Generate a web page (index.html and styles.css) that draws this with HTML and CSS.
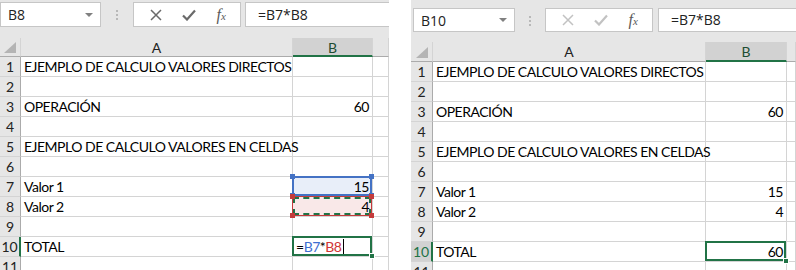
FILE: index.html
```html
<!DOCTYPE html>
<html lang="es">
<head>
    <meta charset="UTF-8">
    <title>Ejemplo de calculo</title>
    <link rel="stylesheet" href="styles.css">
</head>
<body>
<div class="page">

    <!-- hoja en modo edicion -->
    <section class="sheet sheet-edit">
        <div class="toolbar">
            <div class="namebox"><span>B8</span><span class="caret"></span></div>
            <div class="grip"><i></i><i></i><i></i></div>
            <div class="fx-buttons">
                <svg width="12" height="12" viewBox="0 0 12 12"><path d="M1 1 L11 11 M11 1 L1 11" stroke="currentColor" stroke-width="1.5" fill="none"/></svg>
                <svg width="14" height="12" viewBox="0 0 14 12"><path d="M1 6.5 L5 10.5 L13 1.5" stroke="currentColor" stroke-width="2.2" fill="none"/></svg>
                <span class="fx">f<small>x</small></span>
            </div>
            <div class="formula">=B7*B8</div>
        </div>
        <div class="grid">
            <div class="corner"><span class="tri"></span></div>
            <div class="ch">A</div>
            <div class="ch on">B</div>
            <div class="ch"></div>

            <div class="rh">1</div><div class="c">EJEMPLO DE CALCULO VALORES DIRECTOS</div><div class="c"></div><div class="c"></div>
            <div class="rh">2</div><div class="c"></div><div class="c"></div><div class="c"></div>
            <div class="rh">3</div><div class="c">OPERACIÓN</div><div class="c num">60</div><div class="c"></div>
            <div class="rh">4</div><div class="c"></div><div class="c"></div><div class="c"></div>
            <div class="rh">5</div><div class="c">EJEMPLO DE CALCULO VALORES EN CELDAS</div><div class="c"></div><div class="c"></div>
            <div class="rh">6</div><div class="c"></div><div class="c"></div><div class="c"></div>
            <div class="rh">7</div><div class="c">Valor 1</div>
            <div class="c num ref-blue">15<b class="h tl"></b><b class="h tr"></b><b class="h bl"></b><b class="h br"></b></div>
            <div class="c"></div>
            <div class="rh">8</div><div class="c">Valor 2</div>
            <div class="c num ref-red">4<b class="h tl"></b><b class="h tr"></b><b class="h bl"></b><b class="h br"></b></div>
            <div class="c"></div>
            <div class="rh">9</div><div class="c"></div><div class="c"></div><div class="c"></div>
            <div class="rh row-on">10</div><div class="c">TOTAL</div>
            <div class="c active"><span>=</span><span class="t-blue">B7</span><span>*</span><span class="t-red">B8</span><span class="cursor"></span><b class="fill"></b></div>
            <div class="c"></div>
            <div class="rh">11</div><div class="c"></div><div class="c"></div><div class="c"></div>
        </div>
    </section>

    <!-- hoja con el resultado -->
    <section class="sheet sheet-done">
        <div class="toolbar">
            <div class="namebox"><span>B10</span><span class="caret"></span></div>
            <div class="grip"><i></i><i></i><i></i></div>
            <div class="fx-buttons off">
                <svg width="12" height="12" viewBox="0 0 12 12"><path d="M1 1 L11 11 M11 1 L1 11" stroke="currentColor" stroke-width="1.5" fill="none"/></svg>
                <svg width="14" height="12" viewBox="0 0 14 12"><path d="M1 6.5 L5 10.5 L13 1.5" stroke="currentColor" stroke-width="2.2" fill="none"/></svg>
                <span class="fx">f<small>x</small></span>
            </div>
            <div class="formula">=B7*B8</div>
        </div>
        <div class="grid">
            <div class="corner"><span class="tri"></span></div>
            <div class="ch">A</div>
            <div class="ch on">B</div>
            <div class="ch"></div>

            <div class="rh">1</div><div class="c">EJEMPLO DE CALCULO VALORES DIRECTOS</div><div class="c"></div><div class="c"></div>
            <div class="rh">2</div><div class="c"></div><div class="c"></div><div class="c"></div>
            <div class="rh">3</div><div class="c">OPERACIÓN</div><div class="c num">60</div><div class="c"></div>
            <div class="rh">4</div><div class="c"></div><div class="c"></div><div class="c"></div>
            <div class="rh">5</div><div class="c">EJEMPLO DE CALCULO VALORES EN CELDAS</div><div class="c"></div><div class="c"></div>
            <div class="rh">6</div><div class="c"></div><div class="c"></div><div class="c"></div>
            <div class="rh">7</div><div class="c">Valor 1</div><div class="c num">15</div><div class="c"></div>
            <div class="rh">8</div><div class="c">Valor 2</div><div class="c num">4</div><div class="c"></div>
            <div class="rh">9</div><div class="c"></div><div class="c"></div><div class="c"></div>
            <div class="rh row-on row-sel">10</div><div class="c">TOTAL</div>
            <div class="c num active">60<b class="fill"></b></div>
            <div class="c"></div>
            <div class="rh">11</div><div class="c"></div><div class="c"></div><div class="c"></div>
        </div>
    </section>

</div>
</body>
</html>
```

FILE: styles.css
```css
* {
    box-sizing: border-box;
}
body {
    margin: 0;
    background: #ffffff;
    font-family: Lato, 'Liberation Sans', sans-serif;
    color: #000;
}
.page {
    display: flex;
    gap: 22px;
    width: 796px;
    height: 270px;
    overflow: hidden;
}
.sheet {
    display: flex;
    flex-direction: column;
    overflow: hidden;
    height: 270px;
}
.sheet-edit {
    width: 389px;
}
.sheet-done {
    width: 385px;
}

/* barra de formulas */
.toolbar {
    display: flex;
    align-items: flex-start;
    background: #e6e6e6;
    height: 38px;
    flex-shrink: 0;
    padding-top: 2px;
    font-family: 'Open Sans', 'Liberation Sans', sans-serif;
    font-size: 14px;
    color: #222;
}
.sheet-done .toolbar {
    height: 42px;
    padding: 8px 0 0 2px;
}
.namebox {
    width: 101px;
    height: 25px;
    background: #fff;
    border: 1px solid #c6c6c6;
    display: flex;
    align-items: center;
    justify-content: space-between;
    padding: 0 7px 0 7px;
}
.sheet-done .namebox {
    width: 102px;
    height: 24px;
}
.caret {
    border-left: 4px solid transparent;
    border-right: 4px solid transparent;
    border-top: 4px solid #808080;
}
.grip {
    width: 32px;
    display: flex;
    flex-direction: column;
    align-items: center;
    gap: 2px;
    padding-top: 8px;
}
.sheet-done .grip {
    width: 30px;
}
.grip i {
    width: 2px;
    height: 2px;
    background: #b8b8b8;
}
.fx-buttons {
    width: 108px;
    height: 25px;
    background: #fff;
    border: 1px solid #c6c6c6;
    display: flex;
    align-items: center;
    justify-content: space-around;
    padding: 0 4px 0 6px;
    color: #6a6a6a;
}
.sheet-done .fx-buttons {
    height: 24px;
}
.fx-buttons.off svg {
    color: #c2c2c2;
}
.fx {
    font-family: 'Liberation Serif', serif;
    font-style: italic;
    font-size: 16px;
    color: #5a5a5a;
}
.fx small {
    font-size: 11px;
}
.formula {
    flex: 1;
    margin-left: 4px;
    height: 25px;
    background: #fff;
    border: 1px solid #c6c6c6;
    border-right: none;
    padding-left: 12px;
    line-height: 23px;
}
.sheet-done .formula {
    margin-left: 5px;
    height: 24px;
    line-height: 22px;
}

/* cuadricula */
.grid {
    display: grid;
    grid-template-columns: 21px 272px 80px 1fr;
    grid-template-rows: 19px;
    grid-auto-rows: 20px;
    font-size: 14px;
}
.sheet-done .grid {
    grid-template-columns: 22px 273px 81px 1fr;
    grid-template-rows: 20px;
}
.corner {
    background: #e6e6e6;
    border-right: 1px solid #d4d4d4;
    border-bottom: 1px solid #ababab;
    display: flex;
    align-items: flex-end;
    justify-content: flex-end;
    padding: 0 4px 3px 0;
}
.tri {
    width: 0;
    height: 0;
    border-left: 12px solid transparent;
    border-bottom: 11px solid #b4b4b4;
}
.ch {
    background: #e6e6e6;
    border-right: 1px solid #d4d4d4;
    border-bottom: 1px solid #ababab;
    text-align: center;
    font-size: 14px;
    line-height: 19px;
    color: #222;
}
.ch.on {
    background: #d2d2d2;
    border-bottom: 2px solid #217346;
    color: #1d4d33;
}
.rh {
    background: #e6e6e6;
    border-right: 1px solid #ababab;
    border-bottom: 1px solid #d4d4d4;
    text-align: center;
    font-size: 14px;
    line-height: 20px;
    color: #222;
}
.row-on {
    border-right: 2px solid #217346;
}
.row-sel {
    background: #d2d2d2;
    color: #217346;
}
.c {
    position: relative;
    border-right: 1px solid #d4d4d4;
    border-bottom: 1px solid #d4d4d4;
    padding: 0 3px;
    line-height: 20px;
    letter-spacing: -0.5px;
    white-space: nowrap;
}
.num {
    text-align: right;
}

/* referencias de la formula */
.ref-blue {
    background: #e8eef9;
}
.ref-blue::before {
    content: '';
    position: absolute;
    top: -1px;
    left: -1px;
    right: 0;
    bottom: 0;
    border: 2px solid #4472c4;
}
.ref-red {
    background: #f9e8e8;
}
.ref-red::before {
    content: '';
    position: absolute;
    top: -1px;
    left: -1px;
    right: 0;
    bottom: 0;
    border: 1px solid #c43b3b;
}
.ref-red::after {
    content: '';
    position: absolute;
    top: 0;
    left: 0;
    right: 1px;
    bottom: 1px;
    border: 2px dashed #217346;
}
.h {
    position: absolute;
    width: 5px;
    height: 5px;
    z-index: 2;
}
.ref-blue .h {
    background: #4472c4;
}
.ref-red .h {
    background: #c43b3b;
}
.h.tl { top: -3px; left: -3px; }
.h.tr { top: -3px; right: -2px; }
.h.bl { bottom: -2px; left: -3px; }
.h.br { bottom: -2px; right: -2px; }

.active::before {
    content: '';
    position: absolute;
    top: -1px;
    left: -1px;
    right: 0;
    bottom: 0;
    border: 2px solid #217346;
}
.fill {
    position: absolute;
    right: -3px;
    bottom: -3px;
    width: 6px;
    height: 6px;
    background: #217346;
    border: 1px solid #fff;
    z-index: 2;
}
.t-blue {
    color: #3f6fd1;
}
.t-red {
    color: #d03535;
}
.cursor {
    display: inline-block;
    width: 1px;
    height: 16px;
    margin-left: 2px;
    background: #000;
    vertical-align: -3px;
}
```
